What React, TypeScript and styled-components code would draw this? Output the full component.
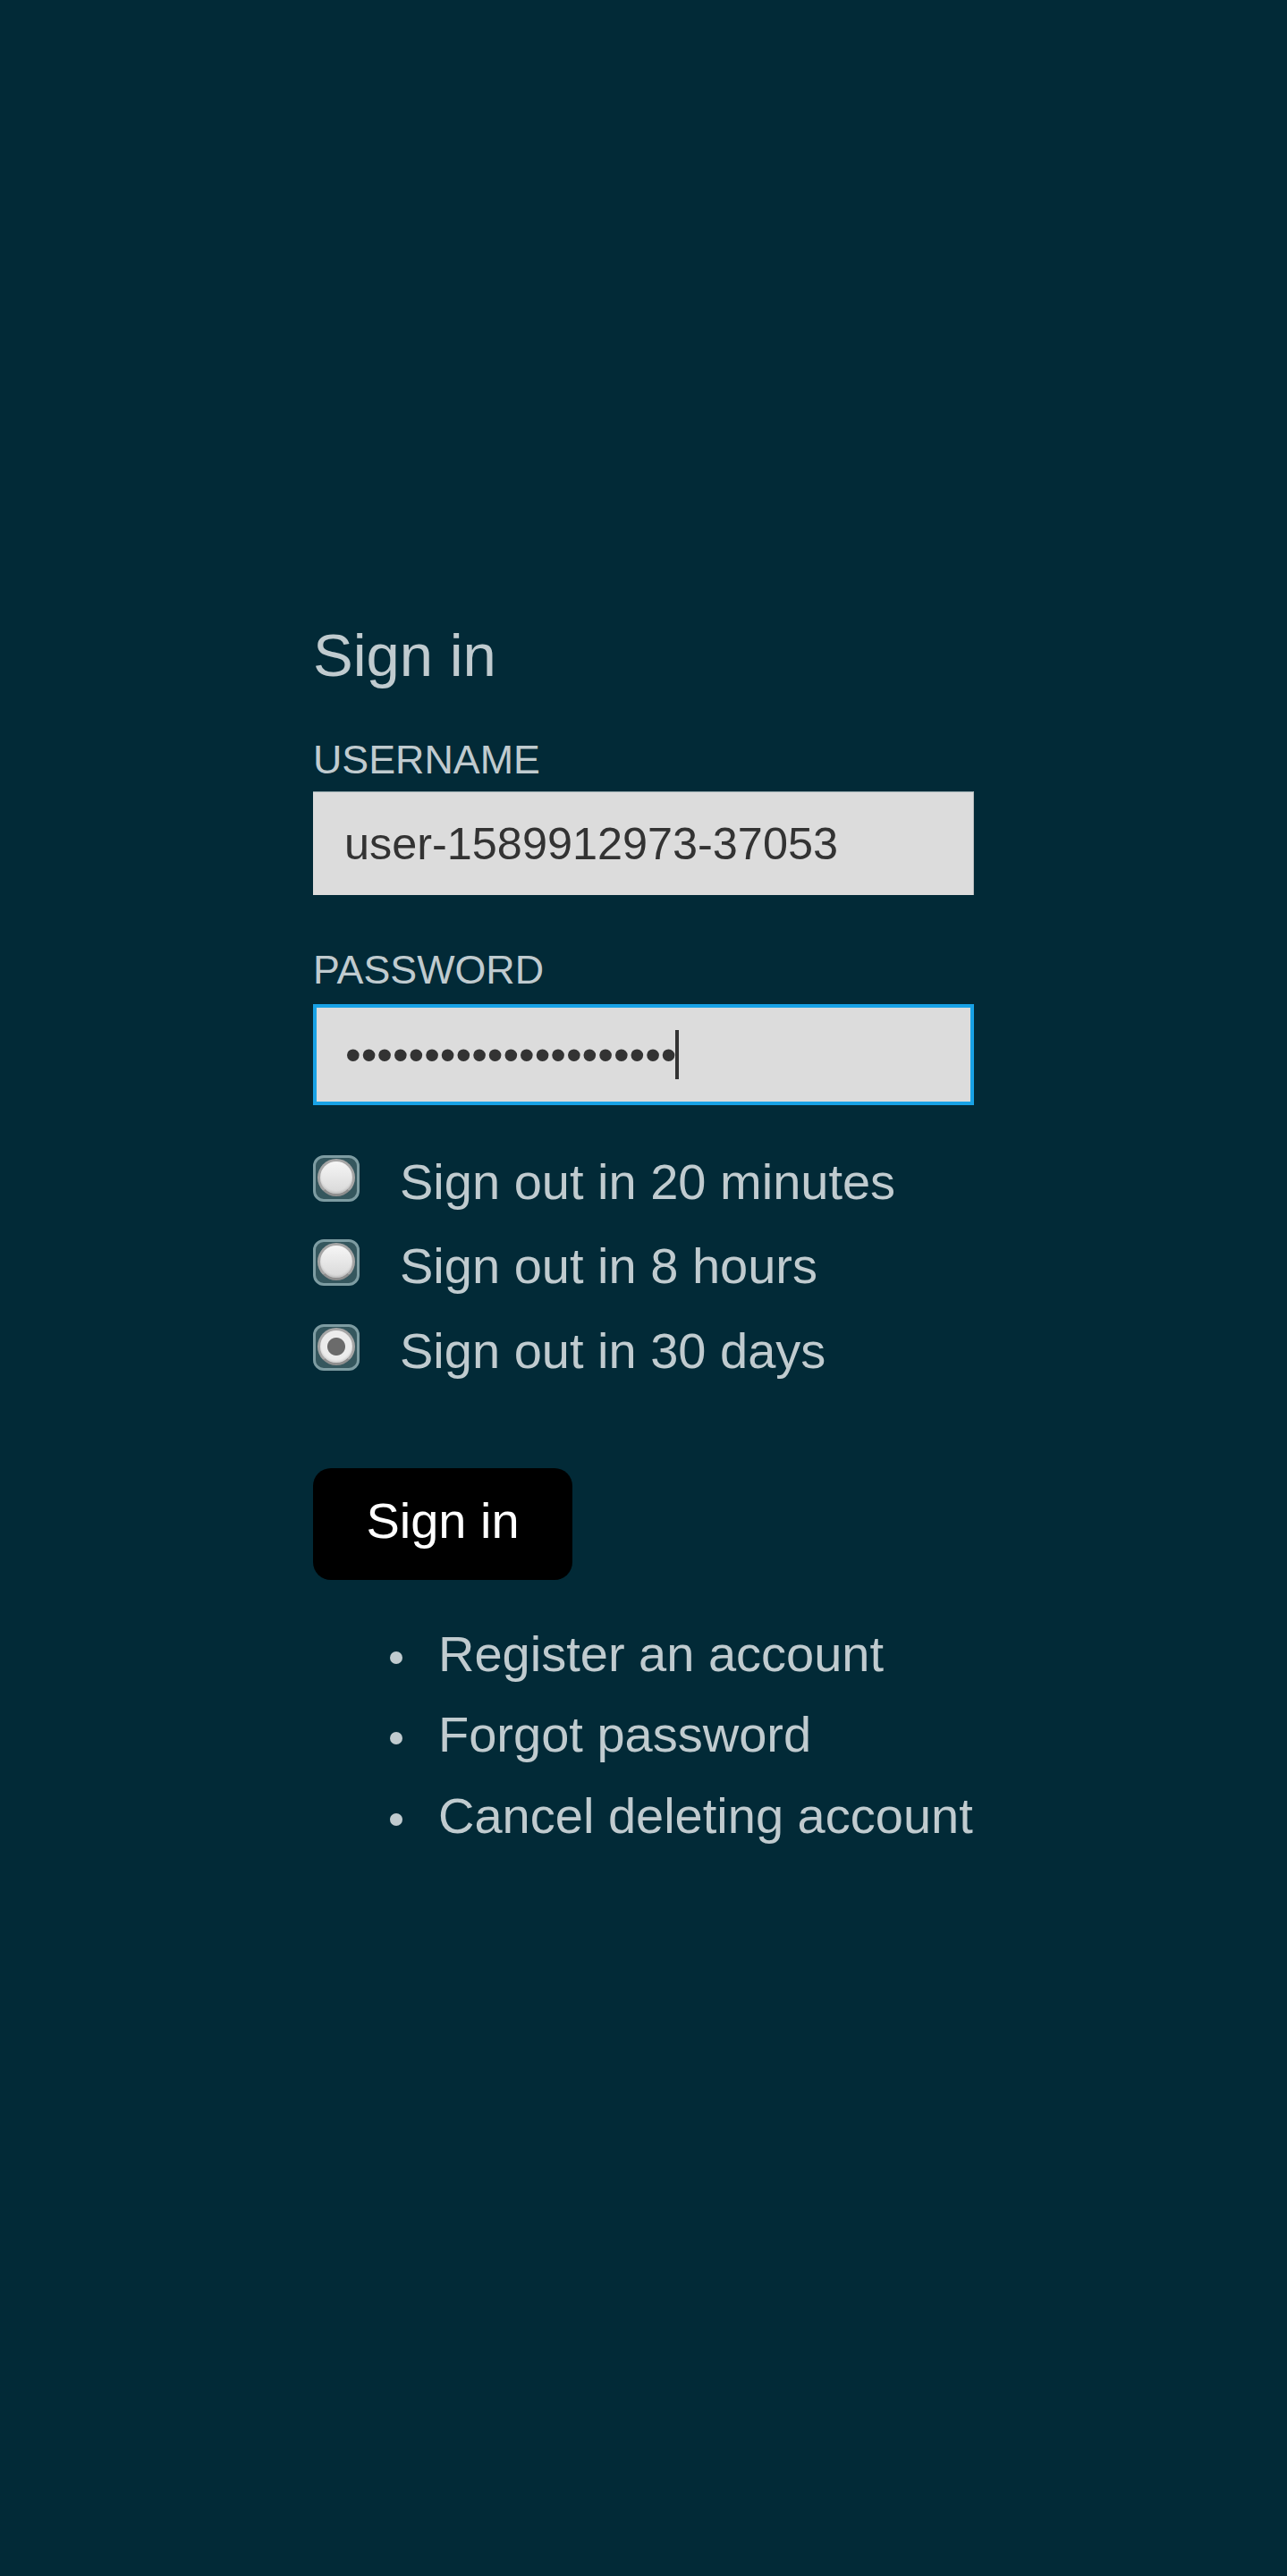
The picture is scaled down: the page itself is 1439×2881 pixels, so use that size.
import styled, { createGlobalStyle } from 'styled-components';

const GlobalStyle = createGlobalStyle`
  html, body {
    margin: 0;
    padding: 0;
    background: #022a37;
  }
  body {
    font-family: "Liberation Sans", Arial, sans-serif;
    color: #c0cbcf;
  }
`;

const Page = styled.main`
  min-height: 2881px;
  background: #022a37;
  display: flex;
  justify-content: center;
  padding-top: 693px;
  box-sizing: border-box;
`;

const Form = styled.form`
  width: 739px;
  display: flex;
  flex-direction: column;
  font-size: 56px;
`;

const Title = styled.h2`
  margin: 0 0 51px;
  font-size: 67px;
  line-height: 80px;
  font-weight: 400;
  color: #c0cbcf;
`;

const Label = styled.label<{ $gap: number }>`
  display: block;
  font-size: 44.8px;
  line-height: 51.5px;
  text-transform: uppercase;
  color: #c0cbcf;
  margin-bottom: ${(p) => p.$gap}px;
`;

const InputWrap = styled.div`
  position: relative;
`;

const TextInput = styled.input<{ $focused?: boolean }>`
  display: block;
  box-sizing: border-box;
  width: 100%;
  height: ${(p) => (p.$focused ? 113 : 116)}px;
  margin: 0;
  padding: 0 0 0 ${(p) => (p.$focused ? 32 : 35)}px;
  font-family: "Liberation Sans", Arial, sans-serif;
  font-size: 50.4px;
  color: #333;
  caret-color: #333;
  background: #dcdcdc;
  border: ${(p) => (p.$focused ? '4px solid #18a2e6' : '0')};
  border-top: ${(p) => (p.$focused ? '4px solid #18a2e6' : '1px solid #8ea1a6')};
  border-right: ${(p) => (p.$focused ? '4px solid #18a2e6' : '1px solid #b4b8b9')};
  border-radius: 0;
  outline: none;

  &:focus {
    outline: none;
  }
`;

/* text caret of the focused password field, drawn over it */
const Caret = styled.span`
  position: absolute;
  left: 405px;
  top: 29px;
  width: 3.5px;
  height: 55px;
  background: #333;
  pointer-events: none;
`;

const Field = styled.div<{ $after: number }>`
  margin-bottom: ${(p) => p.$after}px;
`;

const Radios = styled.div`
  display: flex;
  flex-direction: column;
  margin-bottom: 84px;
`;

const RadioRow = styled.label`
  display: flex;
  align-items: center;
  height: 94.5px;
  line-height: 94.5px;
  font-size: 56px;
  color: #c0cbcf;
  cursor: pointer;
`;

const RadioBox = styled.span`
  box-sizing: border-box;
  flex: none;
  width: 52px;
  height: 52px;
  margin: 0 45px 8px 0;
  border: 3px solid #7d9ca2;
  border-radius: 12px;
  background: #35575e;
  display: flex;
  align-items: center;
  justify-content: center;
`;

const RadioDot = styled.span<{ $checked?: boolean }>`
  box-sizing: border-box;
  width: 42px;
  height: 42px;
  margin-top: -2px;
  border-radius: 50%;
  border: 3px solid #a6a6a6;
  border-bottom-color: #8f8f8f;
  background: ${(p) =>
    p.$checked
      ? 'radial-gradient(circle, #6b6b6b 0 9.5px, #ececec 10.5px)'
      : 'linear-gradient(#f6f6f6, #d8d8d8)'};
  box-shadow: inset 0 -2px 2px rgba(0, 0, 0, 0.1);
`;

const HiddenRadio = styled.input`
  position: absolute;
  opacity: 0;
  width: 0;
  height: 0;
  margin: 0;
`;

const SubmitButton = styled.button`
  align-self: flex-start;
  box-sizing: border-box;
  width: 290px;
  height: 125px;
  margin: 0 0 38px;
  padding: 0 0 8px;
  border: 0;
  border-radius: 20px;
  background: #000;
  color: #fff;
  font-family: "Liberation Sans", Arial, sans-serif;
  font-size: 56px;
  line-height: 1;
  cursor: pointer;
`;

const Links = styled.ul`
  margin: 0;
  padding-left: 140px;
  list-style: none;
  font-size: 56px;
  line-height: 90.3px;
  color: #c0cbcf;
`;

const LinkItem = styled.li`
  &::before {
    content: '';
    display: inline-block;
    width: 14px;
    height: 14px;
    border-radius: 50%;
    background: #c0cbcf;
    margin: 0 40px 0 -54px;
    vertical-align: 8px;
  }

  a {
    color: #c0cbcf;
    text-decoration: none;
  }
`;

const durations = [
  { id: 'm20', label: 'Sign out in 20 minutes' },
  { id: 'h8', label: 'Sign out in 8 hours' },
  { id: 'd30', label: 'Sign out in 30 days' },
];

const links = ['Register an account', 'Forgot password', 'Cancel deleting account'];

const App = () => {
  return (
    <>
      <GlobalStyle />
      <Page>
        <Form onSubmit={(e) => e.preventDefault()}>
          <Title>Sign in</Title>
          <Field $after={58}>
            <Label $gap={9.5} htmlFor="username">
              Username
            </Label>
            <TextInput id="username" type="text" defaultValue="user-1589912973-37053" />
          </Field>
          <Field $after={38.6}>
            <Label $gap={12.5} htmlFor="password">
              Password
            </Label>
            <InputWrap>
              <TextInput id="password" type="password" $focused defaultValue="aaaaaaaaaaaaaaaaaaaaa" />
              <Caret />
            </InputWrap>
          </Field>
          <Radios>
            {durations.map((d, i) => {
              const checked = i === durations.length - 1;
              return (
                <RadioRow key={d.id}>
                  <HiddenRadio type="radio" name="duration" value={d.id} defaultChecked={checked} />
                  <RadioBox>
                    <RadioDot $checked={checked} />
                  </RadioBox>
                  {d.label}
                </RadioRow>
              );
            })}
          </Radios>
          <SubmitButton type="submit">Sign in</SubmitButton>
          <Links>
            {links.map((l) => (
              <LinkItem key={l}>
                <a href="#">{l}</a>
              </LinkItem>
            ))}
          </Links>
        </Form>
      </Page>
    </>
  );
};

export default App;
